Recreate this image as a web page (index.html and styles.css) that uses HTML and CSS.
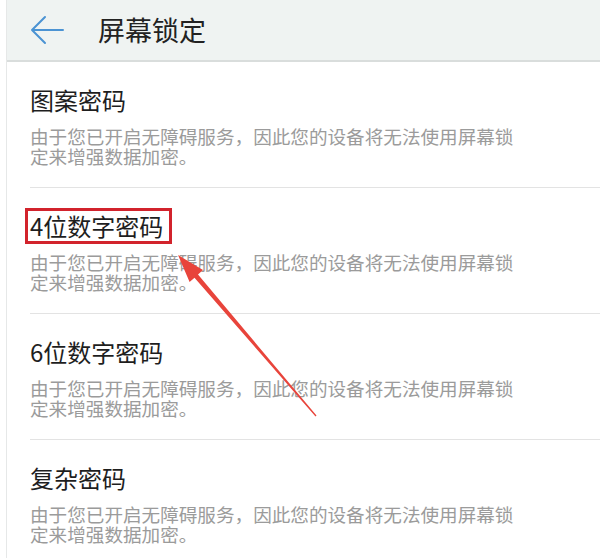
FILE: index.html
```html
<!DOCTYPE html>
<html lang="zh-CN">
<head>
    <meta charset="UTF-8">
    <meta name="viewport" content="width=device-width, initial-scale=1.0">
    <title>屏幕锁定</title>
    <link rel="stylesheet" href="styles.css">
</head>
<body>
    <div class="screen">
        <div class="header">
            <svg class="back" width="36" height="30" viewBox="0 0 36 30">
                <path d="M34 15 H3 M16 2 L3 15 L16 28" fill="none" stroke="#4b93d3" stroke-width="2" stroke-linecap="round" stroke-linejoin="round"/>
            </svg>
            <span class="header-title">屏幕锁定</span>
        </div>

        <div class="list">
            <div class="item">
                <div class="item-title">图案密码</div>
                <p class="item-text">由于您已开启无障碍服务，因此您的设备将无法使用屏幕锁<br>定来增强数据加密。</p>
            </div>
            <div class="item">
                <div class="item-title"><span class="marked">4位数字密码</span></div>
                <p class="item-text">由于您已开启无障碍服务，因此您的设备将无法使用屏幕锁<br>定来增强数据加密。</p>
            </div>
            <div class="item">
                <div class="item-title">6位数字密码</div>
                <p class="item-text">由于您已开启无障碍服务，因此您的设备将无法使用屏幕锁<br>定来增强数据加密。</p>
            </div>
            <div class="item">
                <div class="item-title">复杂密码</div>
                <p class="item-text">由于您已开启无障碍服务，因此您的设备将无法使用屏幕锁<br>定来增强数据加密。</p>
            </div>
        </div>

        <!-- red annotation arrow -->
        <svg class="pointer" width="600" height="558" viewBox="0 0 600 558">
            <polygon points="178,255 203,270 198,274.5 316.5,415.5 315.5,416.5 194.5,277.7 189.6,282" fill="#e8443b"/>
        </svg>
    </div>
</body>
</html>
```

FILE: styles.css
```css
body {
    font-family: "Noto Sans CJK SC", "Noto Sans", sans-serif;
    background-color: #fff;
    margin: 0;
    padding: 0;
}
.screen {
    position: relative;
    margin-left: 6px;
    border-left: 1px solid #e6e8e8;
    height: 558px;
    overflow: hidden;
}
.header {
    height: 62px;
    background-color: #eff3f2;
    border-bottom: 2px solid #d9dddc;
    display: flex;
    align-items: center;
    padding-left: 22px;
    box-sizing: border-box;
}
.back {
    display: block;
}
.header-title {
    margin-left: 33px;
    font-size: 27px;
    color: #222;
    line-height: 32px;
}
.list {
    padding-left: 23px;
}
.item {
    padding: 22px 0 21px;
    border-bottom: 1px solid #e3e3e3;
}
.item-title {
    font-size: 24px;
    line-height: 32px;
    color: #1e1e1e;
}
.marked {
    display: inline-block;
    outline: 3px solid #d2232c;
    padding: 0 6px 0 2px;
    margin-left: -2px;
    line-height: 30px;
    margin-top: 1px;
}
.item-text {
    margin: 10px 0 0;
    font-size: 18.6px;
    line-height: 20px;
    color: #9b9b9b;
}
.pointer {
    position: absolute;
    top: 0;
    left: -7px;
}
```
